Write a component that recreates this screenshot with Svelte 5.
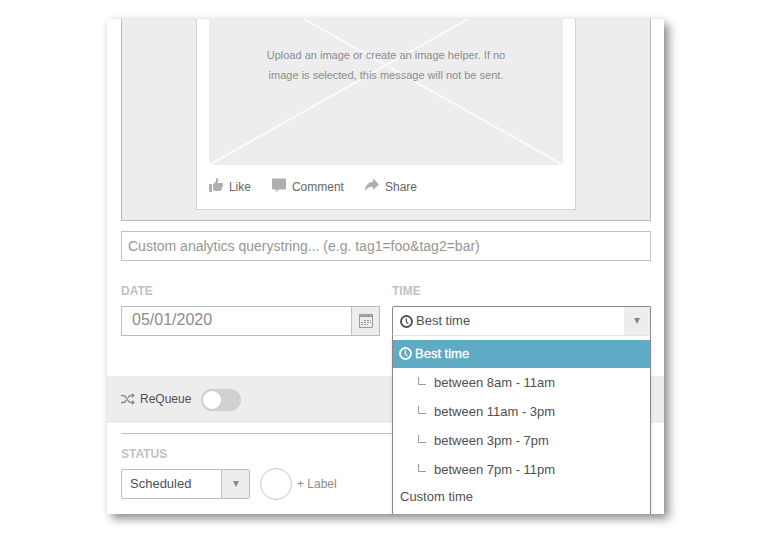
<script>
	const ranges = [
		'between 8am - 11am',
		'between 11am - 3pm',
		'between 3pm - 7pm',
		'between 7pm - 11pm'
	];

	let query = $state('');
	let date = $state('05/01/2020');
	let time = $state('Best time');
	let status = $state('Scheduled');
	let requeue = $state(false);
</script>

{#snippet clock()}
	<svg class="clock" viewBox="0 0 13 13" aria-hidden="true">
		<circle cx="6.5" cy="6.5" r="5.5" />
		<path d="M6.3 3.2v3.6l2 2" />
	</svg>
{/snippet}

<main class="panel">
	<section class="preview">
		<div class="card">
			<div class="placeholder">
				<svg class="cross" viewBox="0 0 355 200" preserveAspectRatio="xMidYMax slice" aria-hidden="true">
					<path d="M0 0L355 200M355 0L0 200" />
				</svg>
				<p>Upload an image or create an image helper. If no image is selected, this message will not be sent.</p>
			</div>
			<div class="actions">
				<button>
					<svg viewBox="0 0 14 14" aria-hidden="true">
						<path d="M0 6h3v8H0zM4 6.5L7 3.2V.8C7 0 9.3-.3 9.3 2.2L8.7 5H13c1 0 1.2 1 .8 1.6.3.6.2 1.3-.4 1.7.2.7 0 1.3-.5 1.7.1.7-.1 1.2-.6 1.5 0 1-.6 1.5-1.5 1.5H7L4 12.3z" />
					</svg>
					Like
				</button>
				<button>
					<svg viewBox="0 0 14 14" aria-hidden="true">
						<path d="M1 .5h12a1 1 0 0 1 1 1v9a1 1 0 0 1-1 1H7L3.8 14v-2.5H1a1 1 0 0 1-1-1v-9a1 1 0 0 1 1-1z" />
					</svg>
					Comment
				</button>
				<button>
					<svg viewBox="0 0 14 14" aria-hidden="true">
						<path d="M8 .5l6 6-6 5.500V9C4.500 8.800 2 9.800 0 13c.4-5.500 3.200-8.800 8-9.200z" />
					</svg>
					Share
				</button>
			</div>
		</div>
	</section>

	<input
		class="query"
		type="text"
		aria-label="Custom analytics querystring"
		placeholder="Custom analytics querystring... (e.g. tag1=foo&tag2=bar)"
		bind:value={query}
	/>

	<div class="schedule">
		<div>
			<label class="heading" for="date">Date</label>
			<div class="field">
				<input id="date" type="text" bind:value={date} />
				<button class="addon" aria-label="Open calendar">
					<svg class="calendar" viewBox="0 0 14 15" aria-hidden="true">
						<path class="fill" d="M0 1h14v3H0z" />
						<path class="outline" d="M.5 3.5h13v11H.5z" />
						<path class="rings" d="M2.5 0v2.5M5.5 0v2.5M8.5 0v2.5M11.5 0v2.5" />
						<path class="days" d="M5 7.5h7M2 9.5h10M2 11.5h7" />
					</svg>
				</button>
			</div>
		</div>
		<div class="time">
			<label class="heading" for="time">Time</label>
			<div class="field open">
				{@render clock()}
				<select id="time" bind:value={time}>
					<option>Best time</option>
					{#each ranges as range}
						<option>{range}</option>
					{/each}
					<option>Custom time</option>
				</select>
				<span class="addon arrow"></span>
			</div>
			<div class="menu" role="listbox" aria-label="Time">
				<button class="best" role="option" aria-selected="true" onclick={() => (time = 'Best time')}>
					{@render clock()}Best time
				</button>
				{#each ranges as range}
					<button class="range" role="option" aria-selected="false" onclick={() => (time = range)}>
						<svg viewBox="0 0 8 8" aria-hidden="true"><path d="M.5 0v7.5H8" /></svg>
						{range}
					</button>
				{/each}
				<button role="option" aria-selected="false" onclick={() => (time = 'Custom time')}>
					Custom time
				</button>
			</div>
		</div>
	</div>

	<div class="requeue">
		<label for="requeue">
			<svg viewBox="0 0 14 12" aria-hidden="true">
				<path class="line" d="M0 2.5h2.500c3 0 4 7 7 7H12M0 9.5h2.500c1.200 0 2-1 2.700-2.300M7 4.800C7.700 3.500 8.400 2.500 9.500 2.500H12" />
				<path d="M11 0l3 2.500L11 5zM11 7l3 2.500-3 2.500z" />
			</svg>
			ReQueue
		</label>
		<input id="requeue" type="checkbox" role="switch" bind:checked={requeue} />
	</div>

	<section class="status">
		<label class="heading" for="status">Status</label>
		<div class="row">
			<div class="field">
				<select id="status" bind:value={status}>
					<option>Scheduled</option>
					<option>Draft</option>
				</select>
				<span class="addon arrow"></span>
			</div>
			<button class="label">
				<span class="circle"></span>
				+ Label
			</button>
		</div>
	</section>
</main>

<style>
	:global(body) {
		background: #fff;
	}

	.panel,
	.panel * {
		box-sizing: border-box;
	}

	.panel {
		display: flex;
		flex-direction: column;
		margin: 19px 106px 23px 107px;
		overflow: hidden;
		background: #fff;
		box-shadow: 5px 5px 9px rgba(0, 0, 0, 0.42), 0 0 6px rgba(0, 0, 0, 0.08);
		color: #505050;
		font-family: 'Liberation Sans', Arial, sans-serif;
		font-size: 13px;
	}

	button,
	input,
	select {
		margin: 0;
		padding: 0;
		border: 0;
		background: none;
		color: inherit;
		font: inherit;
	}

	.preview {
		display: flex;
		justify-content: center;
		margin: 0 13px 0 14px;
		padding-bottom: 10px;
		border: 1px solid #bcbcbc;
		border-top: 0;
		background: #ededed;
	}

	.card {
		width: 72%;
		padding: 0 12px;
		border: 1px solid #d2d2d2;
		border-top: 0;
		background: #fff;
	}

	.placeholder {
		display: grid;
		justify-items: center;
		height: 146px;
		background: #ededed;
	}

	.placeholder > * {
		grid-area: 1 / 1;
	}

	.cross {
		width: 100%;
		height: 146px;
		fill: none;
		stroke: #fafafa;
		stroke-width: 2;
	}

	.placeholder p {
		z-index: 1;
		width: 250px;
		margin: 26px 0 0;
		color: #8c8c8c;
		font-size: 11px;
		line-height: 20px;
		text-align: center;
	}

	.actions {
		display: flex;
		gap: 21px;
		height: 44px;
	}

	.actions button {
		display: flex;
		align-items: center;
		gap: 6px;
		color: #666;
		font-size: 12px;
	}

	.actions svg {
		width: 14px;
		height: 14px;
		margin-bottom: 4px;
		fill: #afafaf;
	}

	.query {
		height: 30px;
		margin: 10px 13px 0 14px;
		padding: 0 6px;
		border: 1px solid #c1c1c1;
		font-size: 14px;
	}

	.query::placeholder {
		color: #969696;
		opacity: 1;
	}

	.schedule {
		display: grid;
		grid-template-columns: 1fr 1fr;
		gap: 12px;
		margin: 22px 13px 40px 14px;
	}

	.heading {
		display: block;
		height: 23px;
		color: #c1c1c1;
		font-size: 12px;
		font-weight: bold;
		line-height: 16px;
		text-transform: uppercase;
	}

	.field {
		display: flex;
		align-items: stretch;
		height: 30px;
		border: 1px solid #bcbcbc;
	}

	.field input,
	.field select {
		flex: 1;
		min-width: 0;
		padding-bottom: 2px;
		appearance: none;
	}

	.field input {
		padding-left: 10px;
		color: #8c8c8c;
		font-size: 16px;
	}

	.addon {
		display: flex;
		flex: none;
		align-items: center;
		justify-content: center;
		width: 28px;
		border-left: 1px solid #c1c1c1;
		background: #ededed;
	}

	.arrow::before {
		border: 3px solid transparent;
		border-top: 6px solid #888;
		border-bottom: 0;
		content: '';
	}

	.calendar {
		width: 14px;
		height: 15px;
		margin-bottom: 2px;
		fill: none;
		stroke: #999;
	}

	.calendar .fill {
		fill: #999;
		stroke: none;
	}

	.calendar .rings {
		stroke: #ccc;
	}

	.calendar .days {
		stroke-dasharray: 2 1;
	}

	.time {
		position: relative;
	}

	.clock {
		flex: none;
		width: 13px;
		height: 13px;
		fill: none;
		stroke: currentColor;
		stroke-width: 1.9;
	}

	.clock path {
		stroke-width: 1.2;
	}

	.open {
		align-items: center;
		gap: 3px;
		padding-left: 7px;
		border-color: #888;
		border-bottom-color: #e4e4e4;
		border-radius: 2px 2px 0 0;
	}

	.open .addon {
		align-self: stretch;
		width: 26px;
		border-left: 0;
	}

	.menu {
		position: absolute;
		top: 100%;
		right: 0;
		left: 0;
		display: flex;
		flex-direction: column;
		padding: 4px 0;
		border: 1px solid #888;
		border-top: 0;
		background: #fff;
		box-shadow: 0 3px 4px rgba(0, 0, 0, 0.12);
	}

	.menu button {
		display: flex;
		align-items: center;
		height: 26px;
		padding: 0 7px 2px;
	}

	.menu .best {
		gap: 3px;
		height: 28px;
		padding-left: 6px;
		background: #5faac4;
		color: #fff;
		-webkit-text-stroke: 0.3px;
	}

	.menu .range {
		gap: 8px;
		height: 29px;
		padding: 0 7px 0 25px;
	}

	.range svg {
		width: 8px;
		height: 8px;
		margin-bottom: 4px;
		fill: none;
		stroke: #999;
	}

	.requeue {
		display: flex;
		align-items: center;
		gap: 10px;
		height: 47px;
		padding: 0 14px;
		background: #ededed;
		font-size: 12px;
	}

	.requeue label {
		display: flex;
		align-items: center;
		gap: 5px;
		padding-bottom: 2px;
	}

	.requeue svg {
		width: 14px;
		height: 12px;
		fill: #888;
	}

	.requeue .line {
		fill: none;
		stroke: #888;
		stroke-width: 1.4;
	}

	.requeue input {
		width: 40px;
		height: 22px;
		padding: 2px;
		border-radius: 11px;
		background: #cfd1d1;
		appearance: none;
	}

	.requeue input::before {
		display: block;
		width: 18px;
		height: 18px;
		border-radius: 50%;
		background: #fff;
		content: '';
	}

	.requeue input:checked::before {
		margin-left: auto;
	}

	.status {
		margin: 10px 13px 0 14px;
		padding: 12px 0 14px;
		border-top: 1px solid #c1c1c1;
	}

	.status .heading {
		height: 22px;
	}

	.row {
		display: flex;
		align-items: center;
		gap: 10px;
	}

	.row .field {
		width: 129px;
		border-radius: 2px;
	}

	.row select {
		padding-left: 8px;
	}

	.label {
		display: flex;
		align-items: center;
		gap: 5px;
		color: #8c8c8c;
		font-size: 12px;
	}

	.circle {
		width: 32px;
		height: 32px;
		border: 1px solid #c8c8c8;
		border-radius: 50%;
	}
</style>
